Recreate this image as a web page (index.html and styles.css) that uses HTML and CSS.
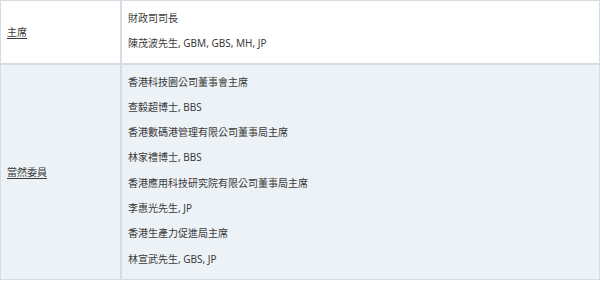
FILE: index.html
```html
<!DOCTYPE html>
<html lang="zh-Hant">
<head>
<meta charset="utf-8">
<title>委員會成員</title>
<link rel="stylesheet" href="styles.css">
</head>
<body>
<table class="members">
  <tr class="row row-odd">
    <th class="role"><span class="role-label">主席</span></th>
    <td class="names">
      <div class="item">財政司司長</div>
      <div class="item">陳茂波先生, GBM, GBS, MH, JP</div>
    </td>
  </tr>
  <tr class="row row-even">
    <th class="role"><span class="role-label">當然委員</span></th>
    <td class="names">
      <div class="item">香港科技園公司董事會主席</div>
      <div class="item">查毅超博士, BBS</div>
      <div class="item">香港數碼港管理有限公司董事局主席</div>
      <div class="item">林家禮博士, BBS</div>
      <div class="item">香港應用科技研究院有限公司董事局主席</div>
      <div class="item">李惠光先生, JP</div>
      <div class="item">香港生產力促進局主席</div>
      <div class="item">林宣武先生, GBS, JP</div>
    </td>
  </tr>
</table>
</body>
</html>
```

FILE: styles.css
```css
html, body {
  margin: 0;
  padding: 0;
  background: #ffffff;
}

body {
  font-family: "Noto Sans", "Noto Sans CJK TC", sans-serif;
  font-size: 10px;
  color: #3a3a3a;
}

.members {
  width: 600px;
  border-collapse: separate;
  border-spacing: 0;
}

.role,
.names {
  border: 1px solid #d5dce4;
  vertical-align: middle;
  text-align: left;
  font-weight: normal;
}

.role {
  width: 107px;
  padding: 0 6px;
}

.role-label {
  text-decoration: underline;
  text-underline-offset: 2px;
}

.names {
  padding: 5px 6px 6px 6px;
}

.row-even .names {
  padding-bottom: 7px;
}

.item {
  line-height: 25.3px;
  white-space: nowrap;
}

.row-odd .role,
.row-odd .names {
  background: #ffffff;
}

.row-even .role,
.row-even .names {
  background: #edf2f7;
}
```
